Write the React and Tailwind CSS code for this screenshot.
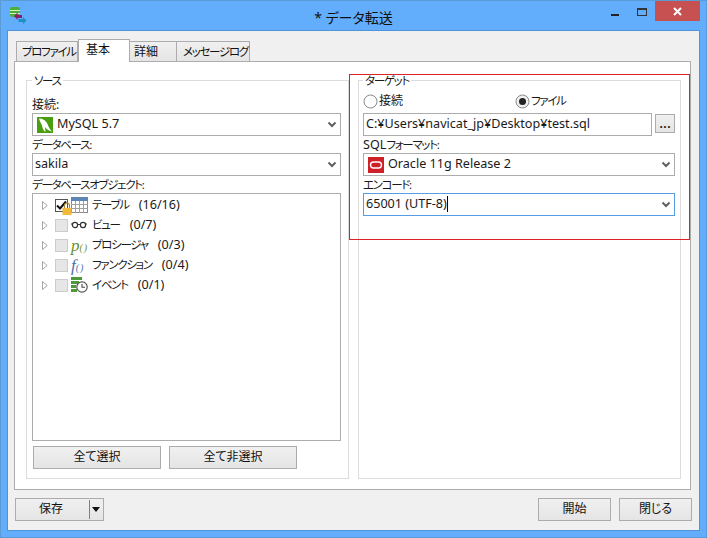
const font = { fontFamily: '"Noto Sans", "Noto Sans CJK JP", sans-serif' };

function Jp({ children }) {
  return <span className="text-[11.5px] tracking-[-1.3px]">{children}</span>;
}

function Chevron() {
  return (
    <svg width="10" height="7" viewBox="0 0 10 7" className="shrink-0">
      <path d="M1.5 1.5 L5 5 L8.5 1.5" fill="none" stroke="#606060" strokeWidth="2" />
    </svg>
  );
}

function MysqlIcon() {
  return (
    <svg width="16" height="16" viewBox="0 0 16 16" className="shrink-0">
      <rect width="16" height="16" fill="#4a9d0c" />
      <path d="M2 1.5 C6 1.5 9 3.5 10.5 7 C11.5 9.5 12.5 12 15 14.5 C11.5 14 9.5 12 8 10 L8.5 15 C6.5 14 5.5 11 5 8.5 C4 6 2.5 4 2 1.5 Z" fill="#fff" />
    </svg>
  );
}

function OracleIcon() {
  return (
    <svg width="16" height="16" viewBox="0 0 16 16" className="shrink-0">
      <rect width="16" height="16" fill="#cf2027" />
      <rect x="2.5" y="5" width="11" height="6" rx="3" fill="none" stroke="#fff" strokeWidth="1.4" />
    </svg>
  );
}

function Combo({ icon, text, focused, cursor }) {
  return (
    <div className={`h-[23px] flex items-center border bg-white pr-[3px] ${focused ? "border-[#569de5]" : "border-[#acacac]"} ${icon ? "pl-[4px]" : "pl-[2px]"}`}>
      {icon}
      <span className={`flex-1 flex items-center pb-px text-[#1a1a1a] ${icon ? "ml-[4px]" : ""}`}>
        {text}
        {cursor && <span className="inline-block w-px h-[16px] bg-black mt-px" />}
      </span>
      <Chevron />
    </div>
  );
}

function Label({ children, className = "" }) {
  return <div className={`h-[17px] leading-[17px] text-[#1a1a1a] ${className}`}>{children}</div>;
}

function Btn({ children, className = "" }) {
  return (
    <button className={`h-[23px] border border-[#acacac] bg-gradient-to-b from-[#f0f0f0] to-[#e5e5e5] text-[#111] text-[12px] flex items-center justify-center pb-px ${className}`}>
      {children}
    </button>
  );
}

function Tab({ children, active, className = "" }) {
  return active ? (
    <div className={`h-[23px] relative z-10 -mb-px bg-white border border-b-0 border-[#acacac] flex items-start pt-[1px] text-[#111] ${className}`}>
      {children}
    </div>
  ) : (
    <div className={`h-[20px] border border-b-0 border-l-0 first:border-l border-[#acacac] bg-gradient-to-b from-[#f0f0f0] to-[#e5e5e5] flex items-center text-[#111] ${className}`}>
      {children}
    </div>
  );
}

function Group({ title, className = "", children }) {
  return (
    <fieldset className={`border border-[#dcdcdc] flex flex-col ${className}`}>
      <legend className="px-[2px] h-[16px] leading-[18px] text-[#1a1a1a]"><Jp>{title}</Jp></legend>
      {children}
    </fieldset>
  );
}

function Radio({ checked }) {
  return (
    <svg width="15" height="15" viewBox="0 0 15 15" className="shrink-0">
      <circle cx="7.5" cy="7.5" r="6.5" fill={checked ? "#f0f0f0" : "#fff"} stroke="#8a8a8a" />
      {checked && <circle cx="7.5" cy="7.5" r="3.5" fill="#222" />}
    </svg>
  );
}

function Tri() {
  return (
    <svg width="6" height="9" viewBox="0 0 6 9" className="shrink-0">
      <path d="M0.5 0.5 L5.2 4.5 L0.5 8.5 Z" fill="#fff" stroke="#a6a6a6" />
    </svg>
  );
}

function TableIcon() {
  return (
    <svg width="17" height="16" viewBox="0 0 17 16">
      <rect x="0.5" y="0.5" width="16" height="15" fill="#fff" stroke="#8a8a8a" />
      <rect x="0" y="0" width="17" height="4" fill="#5b87b5" />
      <path d="M0 7.5H17M0 11.5H17M4.5 4V16M8.5 4V16M12.5 4V16" stroke="#a0a0a0" />
    </svg>
  );
}

function GlassesIcon() {
  return (
    <svg width="17" height="16" viewBox="0 0 17 16">
      <circle cx="4" cy="8" r="2.6" fill="none" stroke="#333" strokeWidth="1.2" />
      <circle cx="12" cy="8" r="2.6" fill="none" stroke="#333" strokeWidth="1.2" />
      <path d="M6.6 7.5H9.4M0 7H1.4M14.6 7H16" stroke="#333" strokeWidth="1" />
    </svg>
  );
}

function EventIcon() {
  return (
    <svg width="17" height="16" viewBox="0 0 17 16">
      <path d="M0 0H11V3H0ZM0 4H8V7H0ZM0 8H5V11H0ZM0 12H6V15H0Z" fill="#4d9a3a" />
      <circle cx="11" cy="10" r="5.2" fill="#fff" stroke="#555" strokeWidth="1.2" />
      <path d="M11 7V10.3H14" fill="none" stroke="#444" strokeWidth="1.1" />
    </svg>
  );
}

function FnIcon({ letter, color }) {
  return (
    <span className="w-[17px] h-[16px] flex items-center italic text-[17px] leading-none" style={{ fontFamily: '"Liberation Serif", serif', color }}>
      {letter}
      <span className="text-[10px] mt-[6px] tracking-[1px]">()</span>
    </span>
  );
}

function TreeRow({ icon, name, count, checked }) {
  return (
    <div className="h-[20px] flex items-center">
      <span className="ml-[9px] mr-[7px] flex"><Tri /></span>
      {checked ? (
        <span className="relative w-[13px] h-[13px] border border-[#555] bg-white mr-[3px] flex items-center justify-center shrink-0">
          <svg width="11" height="11" viewBox="0 0 11 11">
            <path d="M1 5.5 L4 8.5 L10 1.5" fill="none" stroke="#111" strokeWidth="2" />
          </svg>
          <svg width="10" height="13" viewBox="0 0 10 13" className="absolute left-[6px] top-[2px]">
            <path d="M2.5 6V3.5a2.5 2.5 0 0 1 5 0V6" fill="none" stroke="#b08a2a" strokeWidth="1.2" />
            <rect x="0.5" y="6" width="9" height="7" fill="#f2b93b" />
          </svg>
        </span>
      ) : (
        <span className="w-[13px] h-[13px] border border-[#cccccc] bg-[#e6e6e6] mr-[3px] shrink-0" />
      )}
      <span className="w-[17px] flex shrink-0">{icon}</span>
      <span className="ml-[4px] text-[#1a1a1a]"><Jp>{name}</Jp></span>
      <span className="ml-[10px] text-[#1a1a1a]">{count}</span>
    </div>
  );
}

export default function App() {
  return (
    <div className="relative w-[707px] h-[538px] bg-[#63aefc] border border-[#5b9bd5] flex flex-col text-[12.6px] [font-feature-settings:'palt'] overflow-hidden" style={font}>
      <div className="h-[29px] flex shrink-0">
        <div className="w-[120px] pl-[9px] pt-[6px]">
          <svg width="17" height="17" viewBox="0 0 17 17">
            <rect x="0" y="0" width="10" height="10" rx="2" fill="#4caf3a" />
            <path d="M0 3.5H10M0 6.5H10" stroke="#d8f0c8" />
            <path d="M4 9 L7.5 5.5 V8 H12 V11 H7.5 V13 Z" fill="#8a1f6b" />
            <path d="M16.5 13.5 L13 10 V12 H8.5 V15 H13 V17 Z" fill="#1f8fc0" />
          </svg>
        </div>
        <div className="flex-1 flex items-center justify-center text-[14px] text-[#111] pt-[3px]">* データ転送</div>
        <div className="w-[120px] flex justify-end items-start pr-[6px]">
          <div className="w-[8px] h-[2px] bg-[#222] mt-[13px] mr-[18px]" />
          <div className="w-[10px] h-[8px] border border-t-[2px] border-[#333] mt-[7px] mr-[8px]" />
          <div className="w-[45px] h-[20px] bg-[#c75050] flex items-center justify-center">
            <svg width="9" height="9" viewBox="0 0 9 9">
              <path d="M1 1 L8 8 M8 1 L1 8" stroke="#fff" strokeWidth="2" />
            </svg>
          </div>
        </div>
      </div>

      <div className="ml-[6px] mr-[6px] mb-[6px] flex-1 bg-[#f0f0f0] border border-[#4f94d8] flex flex-col pt-[8px] pl-[6px] pr-[8px] pb-[9px]">
        <div className="flex items-end pl-[2px] h-[22px] shrink-0">
          <Tab className="w-[62px] pl-[5px]"><Jp>プロファイル</Jp></Tab>
          <Tab active className="w-[52px] pl-[7px] text-[12px]">基本</Tab>
          <Tab className="w-[47px] pl-[4px] text-[12px]">詳細</Tab>
          <Tab className="w-[73px] border-l pl-[6px]"><Jp>メッセージログ</Jp></Tab>
        </div>
        <div className="flex-1 bg-white border border-[#acacac] flex gap-[9px] pt-[10px] pb-[10px] pl-[11px] pr-[9px]">
          <Group title="ソース" className="w-[323px] pt-[8px] pl-[5px] pr-[7px]">
            <Label className="text-[12px]">接続:</Label>
            <Combo icon={<MysqlIcon />} text="MySQL 5.7" />
            <Label><Jp>データベース:</Jp></Label>
            <Combo text="sakila" />
            <Label><Jp>データベースオブジェクト:</Jp></Label>
            <div className="h-[248px] border border-[#acacac] bg-white pt-[1px]">
              <TreeRow checked icon={<TableIcon />} name="テーブル" count="(16/16)" />
              <TreeRow icon={<GlassesIcon />} name="ビュー" count="(0/7)" />
              <TreeRow icon={<FnIcon letter="p" color="#6a8f2a" />} name="プロシージャ" count="(0/3)" />
              <TreeRow icon={<FnIcon letter="f" color="#4a6fa5" />} name="ファンクション" count="(0/4)" />
              <TreeRow icon={<EventIcon />} name="イベント" count="(0/1)" />
            </div>
            <div className="flex gap-[8px] mt-[5px] pl-px">
              <Btn className="w-[128px]">全て選択</Btn>
              <Btn className="w-[128px]">全て非選択</Btn>
            </div>
          </Group>
          <Group title="ターゲット" className="w-[323px] pt-[5px] pl-[4px] pr-[5px]">
            <div className="h-[16px] mb-[4px] flex items-center">
              <Radio />
              <span className="ml-px w-[136px] text-[12px] text-[#1a1a1a]">接続</span>
              <Radio checked />
              <span className="ml-px text-[#1a1a1a]"><Jp>ファイル</Jp></span>
            </div>
            <div className="flex items-start">
              <div className="w-[289px] h-[23px] border border-[#acacac] bg-white flex items-center pl-[2px] text-[#1a1a1a]">C:¥Users¥navicat_jp¥Desktop¥test.sql</div>
              <Btn className="w-[20px] !h-[19px] ml-[3px] mt-px !pb-[2px] !text-[14px] leading-none font-medium">...</Btn>
            </div>
            <Label>SQL<Jp>フォーマット:</Jp></Label>
            <Combo icon={<OracleIcon />} text="Oracle 11g Release 2" />
            <Label><Jp>エンコード:</Jp></Label>
            <Combo focused cursor text="65001 (UTF-8)" />
          </Group>
        </div>
        <div className="flex items-start mt-[8px] pl-px -mr-px shrink-0">
          <div className="w-[89px] h-[23px] border border-[#acacac] bg-gradient-to-b from-[#f0f0f0] to-[#e5e5e5] flex items-center text-[12px] text-[#111]">
            <span className="flex-1 text-center pr-[3px] pb-px">保存</span>
            <span className="w-px h-[19px] bg-[#808080] mr-[2px]" />
            <svg width="8" height="5" viewBox="0 0 8 5" className="mr-[3px]"><path d="M0 0H8L4 5Z" fill="#111" /></svg>
          </div>
          <div className="flex-1" />
          <Btn className="w-[73px]">開始</Btn>
          <Btn className="w-[73px] ml-[8px]">閉じる</Btn>
        </div>
      </div>

      <div className="absolute left-[348px] top-[73px] w-[341px] h-[166px] border border-[#e0202a] pointer-events-none" />
    </div>
  );
}
